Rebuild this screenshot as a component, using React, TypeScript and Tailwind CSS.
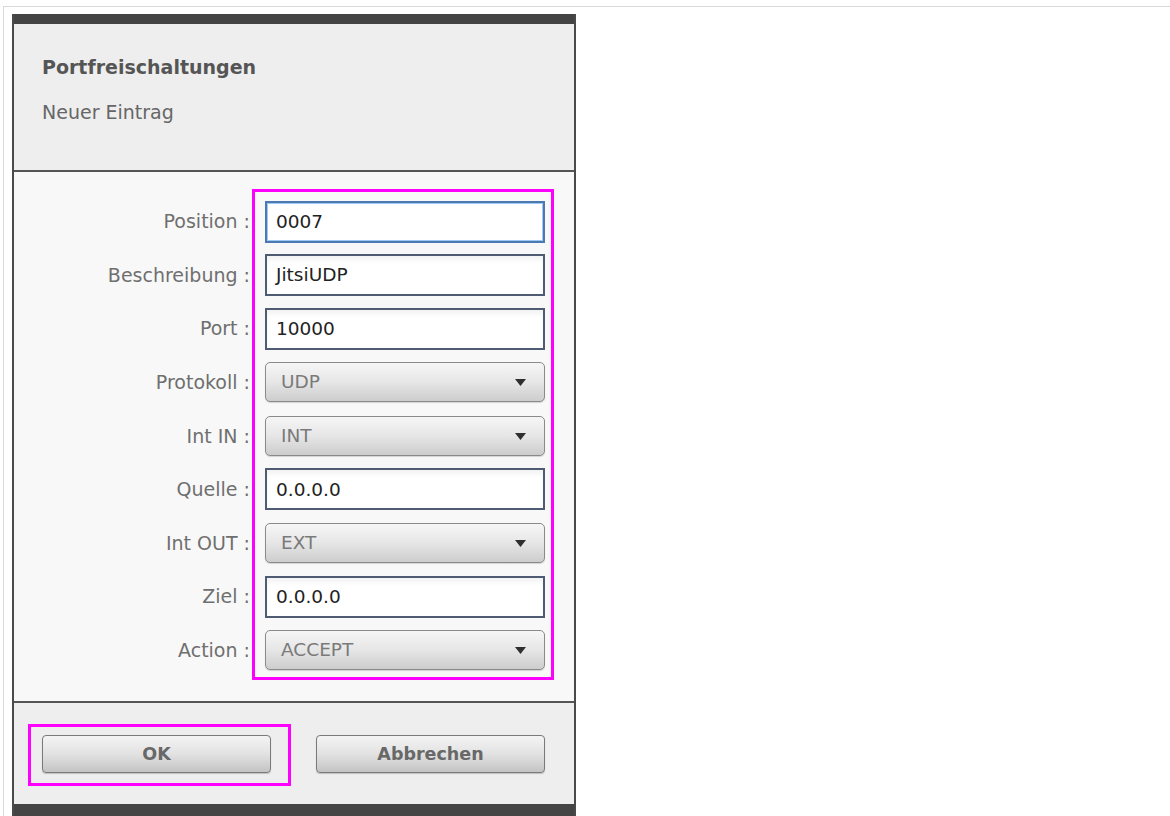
import React from "react";

type Field =
  | { label: string; kind: "input"; value: string; focused?: boolean }
  | { label: string; kind: "select"; value: string };

const fields: Field[] = [
  { label: "Position", kind: "input", value: "0007", focused: true },
  { label: "Beschreibung", kind: "input", value: "JitsiUDP" },
  { label: "Port", kind: "input", value: "10000" },
  { label: "Protokoll", kind: "select", value: "UDP" },
  { label: "Int IN", kind: "select", value: "INT" },
  { label: "Quelle", kind: "input", value: "0.0.0.0" },
  { label: "Int OUT", kind: "select", value: "EXT" },
  { label: "Ziel", kind: "input", value: "0.0.0.0" },
  { label: "Action", kind: "select", value: "ACCEPT" },
];

const font = { fontFamily: '"DejaVu Sans", Verdana, "Noto Sans", sans-serif' };

function TextBox({ value, focused }: { value: string; focused?: boolean }) {
  return (
    <div
      className={
        "h-[42px] w-full flex items-center pl-[9px] text-[18.5px] text-[#222] bg-white " +
        (focused
          ? "border-2 border-[#4d79b0] shadow-[inset_0_0_0_1px_#9cc8f5]"
          : "border-2 border-[#4f5b73] shadow-[inset_0_4px_5px_rgba(0,0,0,0.05)]")
      }
    >
      {value}
    </div>
  );
}

function SelectBox({ value }: { value: string }) {
  return (
    <div className="h-[40px] w-full flex items-center justify-between pl-[15px] pr-[18px] rounded-[5px] border border-[#8a8a8a] bg-gradient-to-b from-[#f6f6f6] via-[#e6e6e6] to-[#cdcdcd] shadow-[0_1px_1px_rgba(0,0,0,0.15)] text-[18.5px] text-[#7a7a7a]">
      <span>{value}</span>
      <svg width="11" height="7" viewBox="0 0 11 7" className="mt-[1px]">
        <path d="M0 0 H11 L5.5 7 Z" fill="#2f2f2f" />
      </svg>
    </div>
  );
}

function Button({ label }: { label: string }) {
  return (
    <button className="w-[229px] h-[38px] rounded-[4px] border border-[#7a7a7a] bg-gradient-to-b from-[#f4f4f4] via-[#e2e2e2] to-[#c4c4c4] shadow-[0_1px_1px_rgba(0,0,0,0.2)] text-[17.5px] font-bold text-[#686868]">
      {label}
    </button>
  );
}

export default function App() {
  return (
    <div className="w-[1170px] h-[816px] bg-white overflow-hidden pt-[6px] pl-[3px]" style={font}>
      <div className="h-full border-t border-l border-[#d9d9d9] pl-[8px] pt-[7px]">
        <div className="w-[564px] flex flex-col border-x-2 border-[#4a4a4a]">
          {/* title bar */}
          <div className="h-[10px] bg-[#444]" />

          {/* header */}
          <div className="h-[148px] bg-[#eeeeee] border-b-2 border-[#555] px-[28px] pt-[31px]">
            <div className="text-[19px] leading-[24px] font-bold text-[#555]">Portfreischaltungen</div>
            <div className="mt-[21px] text-[19px] leading-[24px] text-[#666]">Neuer Eintrag</div>
          </div>

          {/* form body */}
          <div className="h-[531px] bg-[#f8f8f8] border-b-2 border-[#555] pt-[17px] flex">
            <div className="w-[236px] pt-[12px] flex flex-col gap-[12.6px]">
              {fields.map((f) => (
                <div key={f.label} className="h-[41px] flex items-center justify-end text-[19px] text-[#6f6f6f]">
                  {f.label} :
                </div>
              ))}
            </div>
            <div className="ml-[2px] w-[302px] h-[491px] border-[3px] border-[#ff00ff] pt-[9px] pl-[10px] pr-[6px] flex flex-col gap-[12.6px]">
              {fields.map((f) => (
                <div key={f.label} className="h-[41px] flex items-center">
                  {f.kind === "input" ? (
                    <TextBox value={f.value} focused={f.focused} />
                  ) : (
                    <SelectBox value={f.value} />
                  )}
                </div>
              ))}
            </div>
          </div>

          {/* footer */}
          <div className="h-[101px] bg-[#eeeeee] pt-[21px] pl-[14px] flex items-start">
            <div className="w-[263px] h-[62px] border-[3px] border-[#ff00ff] pt-[8px] pl-[11px]">
              <Button label="OK" />
            </div>
            <div className="ml-[25px] pt-[11px]">
              <Button label="Abbrechen" />
            </div>
          </div>

          <div className="h-[14px] bg-[#444]" />
        </div>
      </div>
    </div>
  );
}
